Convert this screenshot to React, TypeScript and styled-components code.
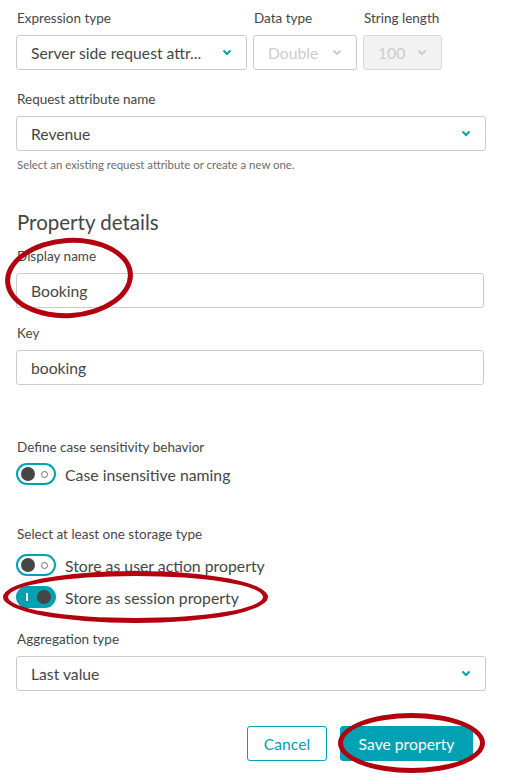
import React from "react";
import styled, { createGlobalStyle } from "styled-components";

const Global = createGlobalStyle`
  html, body { margin: 0; padding: 0; background: #fff; }
  body { font-family: Lato, "Open Sans", sans-serif; color: #454646; }
`;

const teal = "#00a1b2";

const Page = styled.div`
  position: relative;
  width: 513px;
  height: 784px;
  box-sizing: border-box;
  padding: 9px 27px 0 16px;
  display: flex;
  flex-direction: column;
`;

const Row = styled.div`
  display: flex;
  gap: 6px;
`;

const Field = styled.div<{ $mt?: number; $w?: number }>`
  display: flex;
  flex-direction: column;
  margin-top: ${(p) => p.$mt ?? 0}px;
  width: ${(p) => (p.$w ? `${p.$w}px` : "auto")};
`;

const Label = styled.div`
  font-size: 13.5px;
  line-height: 18px;
  margin-bottom: 8px;
  padding-left: 1px;
  white-space: nowrap;
`;

const Box = styled.div<{ $disabled?: boolean; $readonly?: boolean; $w?: string }>`
  box-sizing: border-box;
  height: 35px;
  width: ${(p) => p.$w ?? "100%"};
  border: 1px solid ${(p) => (p.$readonly ? "#d8d8d8" : "#cccccc")};
  border-radius: 3px;
  background: ${(p) => (p.$readonly ? "#f2f2f2" : "#fff")};
  display: flex;
  align-items: center;
  justify-content: space-between;
  padding: 0 14px 0 14px;
  font-size: 15.7px;
  color: ${(p) => (p.$disabled || p.$readonly ? "#cccccc" : "#454646")};
  white-space: nowrap;
`;

const Chevron = ({ color }: { color: string }) => (
  <svg width="10" height="7" viewBox="0 0 10 7">
    <path d="M1.5 1.5 L5 5 L8.5 1.5" fill="none" stroke={color} strokeWidth="2" />
  </svg>
);

const Helper = styled.div`
  font-size: 11.4px;
  line-height: 14px;
  margin-top: 7px;
  color: #6d6d6d;
  padding-left: 1px;
`;

const Heading = styled.h2`
  font-weight: 400;
  font-size: 20.5px;
  line-height: 26px;
  margin: 37px 0 0;
  padding-left: 1px;
`;

const Section = styled.div<{ $mt: number }>`
  display: flex;
  flex-direction: column;
  margin-top: ${(p) => p.$mt}px;
`;

const SubLabel = styled.div<{ $mb: number }>`
  font-size: 13.5px;
  line-height: 18px;
  padding-left: 1px;
  margin-bottom: ${(p) => p.$mb}px;
`;

const ToggleList = styled.div`
  display: flex;
  flex-direction: column;
  gap: 10px;
`;

const ToggleRow = styled.div`
  display: flex;
  align-items: center;
  gap: 9px;
  height: 22px;
  font-size: 15.8px;
`;

const Track = styled.div<{ $on?: boolean }>`
  box-sizing: border-box;
  flex: none;
  width: 40px;
  height: 22px;
  border-radius: 11px;
  border: 2px solid ${teal};
  background: ${(p) => (p.$on ? teal : "#fff")};
  display: flex;
  align-items: center;
  justify-content: space-between;
  padding: 0 3px;
`;

const Knob = styled.div`
  width: 14px;
  height: 14px;
  border-radius: 50%;
  background: #454646;
`;

const Ring = styled.div`
  width: 5px;
  height: 5px;
  border-radius: 50%;
  border: 1.5px solid #6d6d6d;
  margin-right: 3px;
`;

const Bar = styled.div`
  width: 1.5px;
  height: 8px;
  background: #fff;
  margin-left: 5px;
`;

const Toggle = ({ on }: { on?: boolean }) => (
  <Track $on={on}>
    {on ? (
      <>
        <Bar />
        <Knob />
      </>
    ) : (
      <>
        <Knob />
        <Ring />
      </>
    )}
  </Track>
);

const Buttons = styled.div`
  display: flex;
  justify-content: flex-end;
  gap: 13px;
  margin-top: 35px;
  padding-right: 13px;
`;

const Button = styled.button<{ $primary?: boolean }>`
  box-sizing: border-box;
  height: 35px;
  border-radius: 3px;
  font-family: Lato, "Open Sans", sans-serif;
  font-size: 15.7px;
  border: 1px solid ${teal};
  background: ${(p) => (p.$primary ? teal : "#fff")};
  color: ${(p) => (p.$primary ? "#fff" : teal)};
  padding: 0;
  width: ${(p) => (p.$primary ? "133px" : "80px")};
`;

const Ellipse = styled.div<{ $x: number; $y: number; $w: number; $h: number; $rot?: number }>`
  position: absolute;
  box-sizing: border-box;
  left: ${(p) => p.$x}px;
  top: ${(p) => p.$y}px;
  width: ${(p) => p.$w}px;
  height: ${(p) => p.$h}px;
  border: 5px solid #b3000f;
  border-radius: 50%;
  transform: rotate(${(p) => p.$rot ?? 0}deg);
  pointer-events: none;
`;

export default function App() {
  return (
    <>
      <Global />
      <Page>
        <Row>
          <Field $w={231}>
            <Label>Expression type</Label>
            <Box>
              <span>Server side request attr...</span>
              <Chevron color={teal} />
            </Box>
          </Field>
          <Field $w={104}>
            <Label>Data type</Label>
            <Box $disabled>
              <span>Double</span>
              <Chevron color="#cccccc" />
            </Box>
          </Field>
          <Field $w={79}>
            <Label>String length</Label>
            <Box $readonly>
              <span>100</span>
              <Chevron color="#cccccc" />
            </Box>
          </Field>
        </Row>

        <Field $mt={20}>
          <Label>Request attribute name</Label>
          <Box>
            <span>Revenue</span>
            <Chevron color={teal} />
          </Box>
        </Field>
        <Helper>Select an existing request attribute or create a new one.</Helper>

        <Heading>Property details</Heading>

        <Field $mt={12}>
          <Label>Display name</Label>
          <Box $w="468px">Booking</Box>
        </Field>

        <Field $mt={16}>
          <Label>Key</Label>
          <Box $w="468px">booking</Box>
        </Field>

        <Section $mt={53}>
          <SubLabel $mb={7}>Define case sensitivity behavior</SubLabel>
          <ToggleRow>
            <Toggle />
            <span>Case insensitive naming</span>
          </ToggleRow>
        </Section>

        <Section $mt={40}>
          <SubLabel $mb={11}>Select at least one storage type</SubLabel>
          <ToggleList>
            <ToggleRow>
              <Toggle />
              <span>Store as user action property</span>
            </ToggleRow>
            <ToggleRow>
              <Toggle on />
              <span>Store as session property</span>
            </ToggleRow>
          </ToggleList>
        </Section>

        <Field $mt={22}>
          <Label>Aggregation type</Label>
          <Box>
            <span>Last value</span>
            <Chevron color={teal} />
          </Box>
        </Field>

        <Buttons>
          <Button>Cancel</Button>
          <Button $primary>Save property</Button>
        </Buttons>

        <Ellipse $x={5} $y={238} $w={128} $h={80} $rot={-4} />
        <Ellipse $x={3} $y={571} $w={265} $h={52} />
        <Ellipse $x={338} $y={713} $w={147} $h={60} />
      </Page>
    </>
  );
}
